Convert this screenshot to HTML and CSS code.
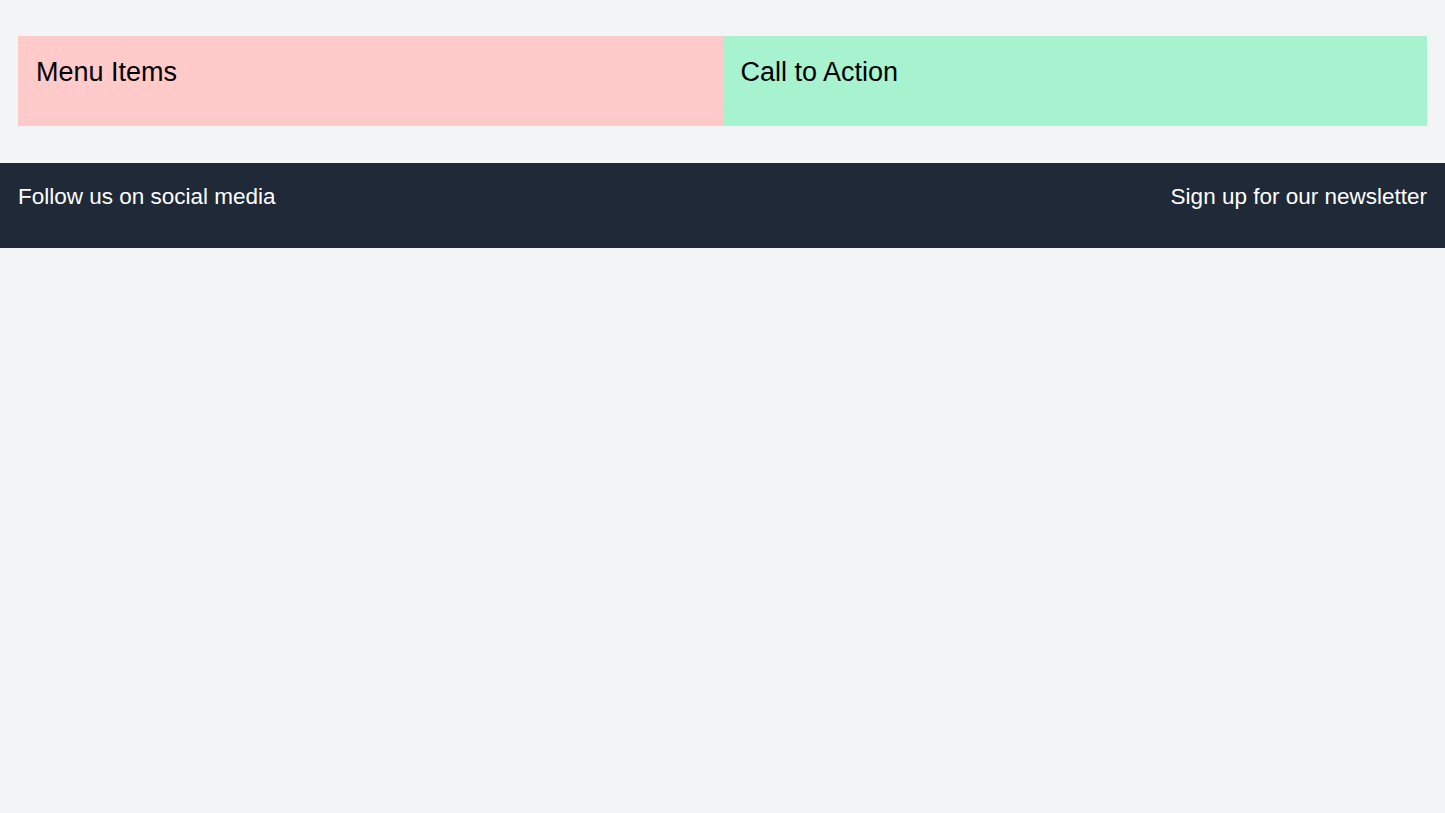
FILE: index.html
```html
<!DOCTYPE html>
<html lang="en">
<head>
<meta charset="utf-8">
<title>Page</title>
<link rel="stylesheet" href="styles.css">
</head>
<body>
  <main class="main">
    <div class="grid">
      <section class="panel panel-menu">
        <h2 class="panel-title">Menu Items</h2>
      </section>
      <section class="panel panel-cta">
        <h2 class="panel-title">Call to Action</h2>
      </section>
    </div>
  </main>
  <footer class="footer">
    <p class="footer-text">Follow us on social media</p>
    <p class="footer-text">Sign up for our newsletter</p>
  </footer>
</body>
</html>
```

FILE: styles.css
```css
html, body {
  margin: 0;
  padding: 0;
}
body {
  background: #f3f4f6;
  font-family: "Liberation Sans", Arial, sans-serif;
  color: #000;
  min-height: 813px;
}
.main {
  padding: 36px 18px 37px 18px;
}
.grid {
  display: grid;
  grid-template-columns: 1fr 1fr;
}
.panel {
  padding: 18px 18px 0 18px;
  height: 90px;
  box-sizing: border-box;
}
.panel-menu { background: #fecaca; }
.panel-cta { background: #a7f3d0; }
.panel-title {
  margin: 0;
  font-size: 27px;
  line-height: 36px;
  font-weight: 400;
}
.footer {
  background: #1f2937;
  color: #fff;
  display: flex;
  justify-content: space-between;
  align-items: flex-start;
  padding: 18px 18px 0 18px;
  height: 85px;
  box-sizing: border-box;
}
.footer-text {
  margin: 0;
  font-size: 22.5px;
  line-height: 31.5px;
}
```
